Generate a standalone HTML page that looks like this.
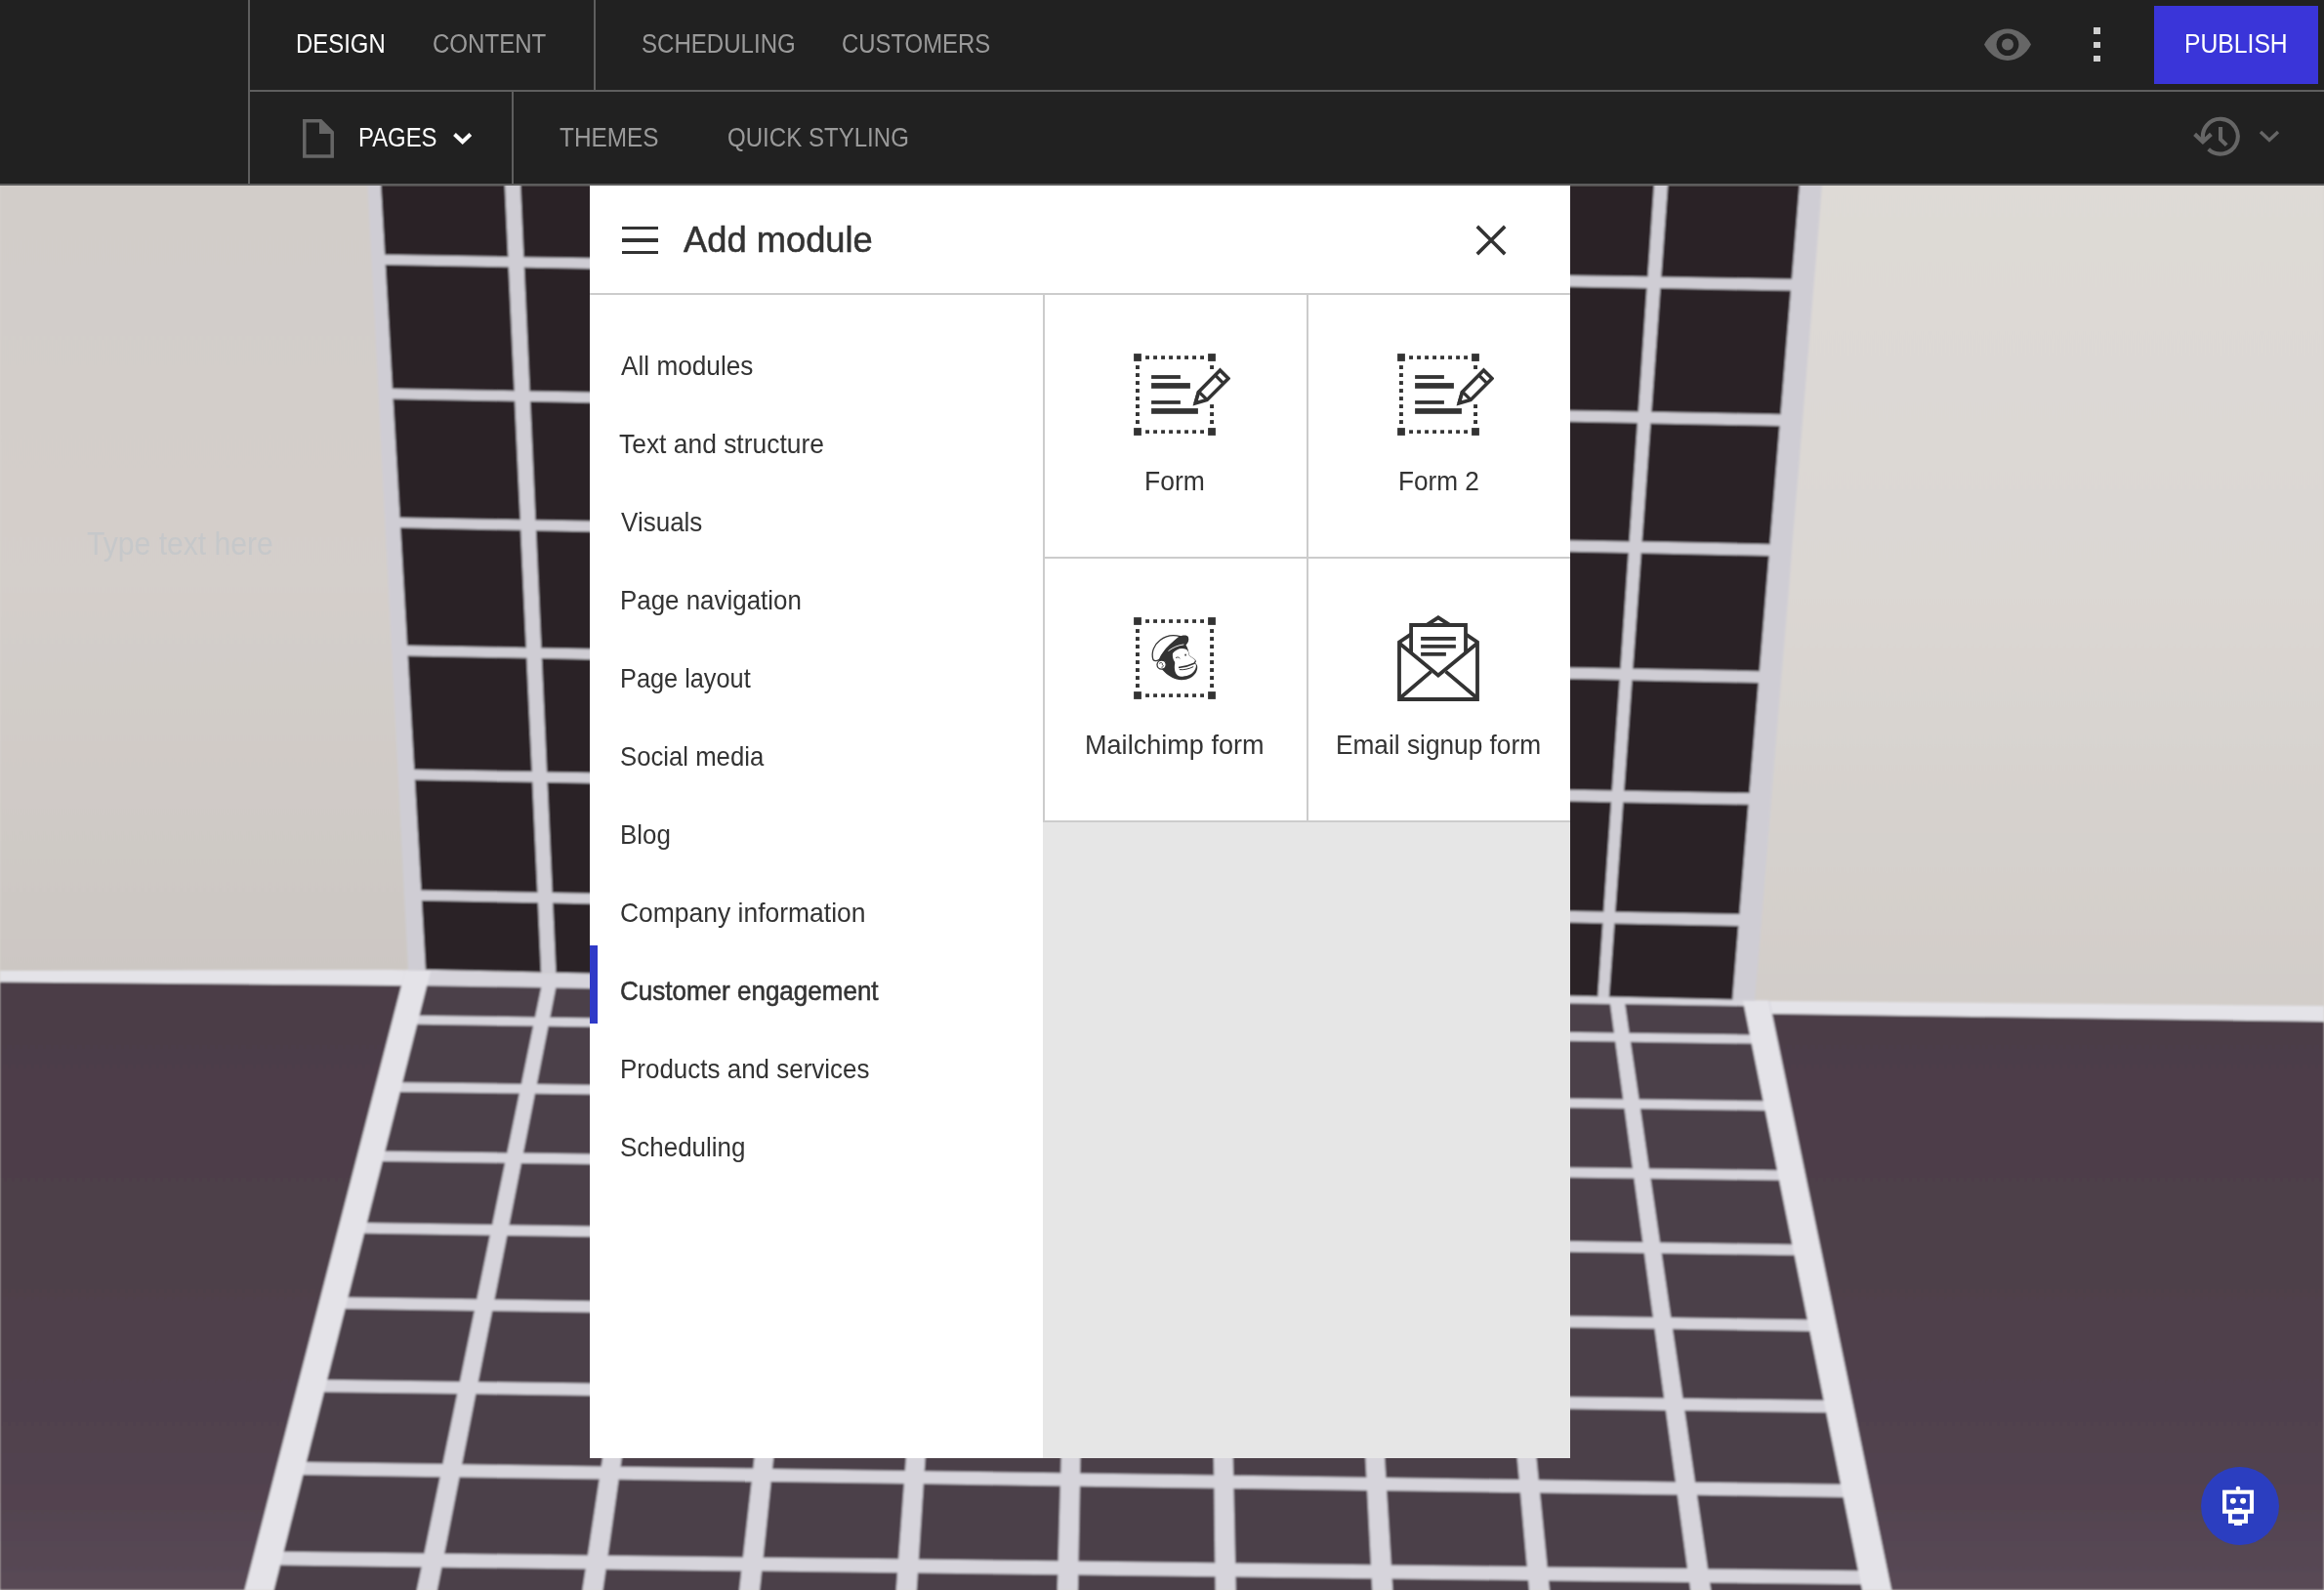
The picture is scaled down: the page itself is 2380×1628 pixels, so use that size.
<!DOCTYPE html>
<html><head><meta charset="utf-8"><title>Add module</title>
<style>
html,body{margin:0;padding:0;width:2380px;height:1628px;overflow:hidden;background:#d8d4d0;}
body{position:relative;font-family:"Liberation Sans", sans-serif;}
.t{position:absolute;white-space:nowrap;line-height:1;transform-origin:0 0;}
.abs{position:absolute;}
</style></head><body>

<svg class="abs" style="left:0;top:0" width="2380" height="1628" viewBox="0 0 2380 1628">
<defs><filter id="soft" x="0" y="0" width="1" height="1"><feGaussianBlur stdDeviation="0.9"/></filter></defs><g filter="url(#soft)">
<defs><linearGradient id="wl" gradientUnits="userSpaceOnUse" x1="0" y1="189" x2="0" y2="1000"><stop offset="0" stop-color="#d2cdc9"/><stop offset="0.5" stop-color="#d4cfcb"/><stop offset="1" stop-color="#ccc7c3"/></linearGradient><linearGradient id="wr" gradientUnits="userSpaceOnUse" x1="0" y1="189" x2="0" y2="1030"><stop offset="0" stop-color="#dedad6"/><stop offset="0.5" stop-color="#dbd7d3"/><stop offset="1" stop-color="#d2cdc9"/></linearGradient></defs>
<rect x="0" y="0" width="1200" height="1628" fill="url(#wl)"/>
<rect x="1200" y="0" width="1180" height="1628" fill="url(#wr)"/>
<polygon points="0.0,994.0 400.0,993.0 1812.0,1025.0 2380.0,1030.0 2380.0,1628.0 0.0,1628.0" fill="#e4e3e8"/>
<defs><linearGradient id="fl" x1="0" y1="0" x2="0" y2="1"><stop offset="0" stop-color="#4c3d47"/><stop offset="0.55" stop-color="#4f404b"/><stop offset="0.85" stop-color="#524350"/><stop offset="1" stop-color="#594955"/></linearGradient></defs>
<polygon points="0.0,1005.5 400.0,1009.0 1812.0,1038.0 2380.0,1046.0 2380.0,1628.0 0.0,1628.0" fill="url(#fl)"/>
<polygon points="415.2,993.6 1000.0,1006.6 1600.0,1020.2 1812.2,1024.7 1937.0,1628.0 250.6,1628.0" fill="#d6d4db"/>
<polygon points="415.3,993.6 441.2,993.6 280.6,1628.0 250.6,1628.0" fill="#e4e3e8"/>
<polygon points="1784.9,1024.6 1811.0,1024.6 1937.0,1628.0 1907.0,1628.0" fill="#e4e3e8"/>
<polygon points="437.2,1009.3 554.3,1011.1 548.0,1041.5 429.5,1039.7" fill="#4c3f4a"/>
<polygon points="427.2,1048.8 546.1,1050.5 533.9,1109.9 412.1,1108.2" fill="#4c3f4a"/>
<polygon points="409.7,1117.9 531.9,1119.5 519.3,1180.4 394.3,1178.7" fill="#4c3f4a"/>
<polygon points="391.7,1188.9 517.2,1190.7 504.1,1253.9 375.8,1251.9" fill="#4c3f4a"/>
<polygon points="373.0,1262.8 501.8,1264.8 488.3,1330.3 356.4,1328.3" fill="#4c3f4a"/>
<polygon points="353.5,1339.9 485.9,1341.9 470.9,1414.7 335.0,1412.8" fill="#4c3f4a"/>
<polygon points="331.9,1425.2 468.3,1427.0 453.4,1499.0 313.7,1497.0" fill="#4c3f4a"/>
<polygon points="310.4,1510.1 450.7,1512.2 434.5,1590.5 290.5,1588.7" fill="#4c3f4a"/>
<polygon points="287.0,1602.6 431.7,1604.4 415.7,1681.8 267.4,1680.0" fill="#4c3f4a"/>
<polygon points="569.2,1011.4 690.5,1013.2 685.9,1043.5 563.3,1041.7" fill="#4c3f4a"/>
<polygon points="561.5,1050.7 684.5,1052.5 675.4,1111.9 549.8,1110.1" fill="#4c3f4a"/>
<polygon points="547.9,1119.8 673.9,1121.5 664.6,1182.4 535.9,1180.6" fill="#4c3f4a"/>
<polygon points="533.9,1190.9 663.0,1192.7 653.3,1256.2 521.4,1254.2" fill="#4c3f4a"/>
<polygon points="519.3,1265.1 651.7,1267.1 641.6,1332.7 506.4,1330.6" fill="#4c3f4a"/>
<polygon points="504.1,1342.2 639.8,1344.3 628.7,1416.8 489.7,1414.9" fill="#4c3f4a"/>
<polygon points="487.3,1427.3 626.8,1429.2 615.8,1501.4 473.1,1499.3" fill="#4c3f4a"/>
<polygon points="470.5,1512.4 613.8,1514.5 601.9,1592.5 455.1,1590.7" fill="#4c3f4a"/>
<polygon points="452.4,1604.7 599.7,1606.4 587.9,1683.9 437.1,1682.1" fill="#4c3f4a"/>
<polygon points="705.5,1013.5 826.9,1015.3 823.5,1045.5 701.2,1043.7" fill="#4c3f4a"/>
<polygon points="699.9,1052.7 822.4,1054.5 815.7,1113.8 691.4,1112.1" fill="#4c3f4a"/>
<polygon points="690.0,1121.7 814.6,1123.4 807.6,1184.3 681.3,1182.6" fill="#4c3f4a"/>
<polygon points="679.8,1192.9 806.5,1194.6 799.2,1258.4 670.7,1256.4" fill="#4c3f4a"/>
<polygon points="669.1,1267.4 797.9,1269.4 790.5,1334.9 659.7,1332.9" fill="#4c3f4a"/>
<polygon points="658.1,1344.5 789.2,1346.6 780.9,1418.9 647.7,1417.1" fill="#4c3f4a"/>
<polygon points="645.9,1429.5 779.5,1431.3 771.3,1503.6 635.5,1501.7" fill="#4c3f4a"/>
<polygon points="633.6,1514.8 769.8,1516.8 760.9,1594.4 622.5,1592.7" fill="#4c3f4a"/>
<polygon points="620.5,1606.7 759.3,1608.4 750.5,1685.9 609.4,1684.2" fill="#4c3f4a"/>
<polygon points="841.9,1015.5 963.4,1017.4 961.2,1047.5 838.8,1045.7" fill="#4c3f4a"/>
<polygon points="837.8,1054.7 960.5,1056.5 956.1,1115.7 831.7,1114.0" fill="#4c3f4a"/>
<polygon points="830.7,1123.6 955.4,1125.3 950.8,1186.3 824.3,1184.6" fill="#4c3f4a"/>
<polygon points="823.2,1194.9 950.0,1196.6 945.2,1260.7 816.6,1258.7" fill="#4c3f4a"/>
<polygon points="815.4,1269.6 944.4,1271.6 939.5,1337.2 808.6,1335.2" fill="#4c3f4a"/>
<polygon points="807.4,1346.8 938.6,1348.8 933.2,1421.0 799.8,1419.2" fill="#4c3f4a"/>
<polygon points="798.6,1431.6 932.3,1433.4 926.9,1505.9 791.0,1503.9" fill="#4c3f4a"/>
<polygon points="789.6,1517.1 925.9,1519.1 920.1,1596.3 781.6,1594.7" fill="#4c3f4a"/>
<polygon points="780.1,1608.6 919.1,1610.3 913.3,1687.8 772.0,1686.1" fill="#4c3f4a"/>
<polygon points="978.5,1017.6 1100.2,1019.5 1099.4,1049.5 976.5,1047.7" fill="#4c3f4a"/>
<polygon points="976.0,1056.7 1099.1,1058.5 1097.4,1117.6 972.1,1115.9" fill="#4c3f4a"/>
<polygon points="971.5,1125.6 1097.2,1127.3 1095.4,1188.3 967.5,1186.5" fill="#4c3f4a"/>
<polygon points="966.8,1196.8 1095.1,1198.6 1093.3,1262.9 962.7,1260.9" fill="#4c3f4a"/>
<polygon points="961.9,1271.9 1093.0,1273.9 1091.1,1339.5 957.7,1337.5" fill="#4c3f4a"/>
<polygon points="956.9,1349.1 1090.8,1351.2 1088.7,1423.1 952.2,1421.3" fill="#4c3f4a"/>
<polygon points="951.4,1433.7 1088.4,1435.5 1086.3,1508.2 946.7,1506.2" fill="#4c3f4a"/>
<polygon points="945.8,1519.3 1085.9,1521.4 1083.7,1598.3 940.8,1596.6" fill="#4c3f4a"/>
<polygon points="939.9,1610.6 1083.3,1612.3 1081.1,1689.9 934.8,1688.1" fill="#4c3f4a"/>
<polygon points="1115.3,1019.7 1237.1,1021.6 1237.5,1051.5 1114.8,1049.7" fill="#4c3f4a"/>
<polygon points="1114.6,1058.7 1237.6,1060.5 1238.4,1119.6 1113.5,1117.9" fill="#4c3f4a"/>
<polygon points="1113.3,1127.5 1238.5,1129.2 1239.2,1190.3 1112.1,1188.5" fill="#4c3f4a"/>
<polygon points="1112.0,1198.8 1239.4,1200.6 1240.2,1265.2 1110.7,1263.2" fill="#4c3f4a"/>
<polygon points="1110.5,1274.1 1240.3,1276.1 1241.1,1341.8 1109.3,1339.8" fill="#4c3f4a"/>
<polygon points="1109.1,1351.5 1241.3,1353.5 1242.2,1425.2 1107.7,1423.4" fill="#4c3f4a"/>
<polygon points="1107.5,1435.8 1242.3,1437.7 1243.2,1510.5 1106.1,1508.5" fill="#4c3f4a"/>
<polygon points="1105.9,1521.7 1243.4,1523.7 1244.3,1600.3 1104.4,1598.6" fill="#4c3f4a"/>
<polygon points="1104.2,1612.5 1244.5,1614.2 1245.5,1691.9 1102.7,1690.1" fill="#4c3f4a"/>
<polygon points="1252.3,1021.8 1374.2,1023.7 1375.7,1053.5 1252.9,1051.7" fill="#4c3f4a"/>
<polygon points="1253.1,1060.7 1376.2,1062.5 1379.2,1121.5 1254.4,1119.8" fill="#4c3f4a"/>
<polygon points="1254.6,1129.5 1379.7,1131.2 1382.9,1192.2 1256.0,1190.5" fill="#4c3f4a"/>
<polygon points="1256.2,1200.8 1383.4,1202.5 1386.8,1267.4 1257.7,1265.4" fill="#4c3f4a"/>
<polygon points="1257.9,1276.4 1387.3,1278.4 1390.7,1344.1 1259.3,1342.1" fill="#4c3f4a"/>
<polygon points="1259.6,1353.8 1391.3,1355.8 1395.0,1427.3 1261.2,1425.5" fill="#4c3f4a"/>
<polygon points="1261.5,1437.9 1395.6,1439.8 1399.4,1512.8 1263.1,1510.8" fill="#4c3f4a"/>
<polygon points="1263.4,1524.0 1400.1,1525.9 1404.0,1602.2 1265.1,1600.5" fill="#4c3f4a"/>
<polygon points="1265.4,1614.5 1404.7,1616.2 1408.7,1693.8 1267.1,1692.1" fill="#4c3f4a"/>
<polygon points="1389.4,1023.9 1511.4,1025.8 1514.1,1055.5 1391.2,1053.7" fill="#4c3f4a"/>
<polygon points="1391.7,1062.8 1514.9,1064.5 1520.3,1123.4 1395.3,1121.7" fill="#4c3f4a"/>
<polygon points="1395.9,1131.4 1521.2,1133.1 1526.7,1194.2 1399.7,1192.5" fill="#4c3f4a"/>
<polygon points="1400.3,1202.8 1527.6,1204.5 1533.5,1269.7 1404.3,1267.7" fill="#4c3f4a"/>
<polygon points="1404.9,1278.7 1534.5,1280.6 1540.5,1346.4 1409.0,1344.4" fill="#4c3f4a"/>
<polygon points="1409.7,1356.1 1541.5,1358.1 1548.0,1429.4 1414.1,1427.6" fill="#4c3f4a"/>
<polygon points="1414.8,1440.0 1549.1,1441.9 1555.8,1515.0 1419.3,1513.1" fill="#4c3f4a"/>
<polygon points="1420.1,1526.2 1557.0,1528.2 1563.8,1604.1 1424.8,1602.4" fill="#4c3f4a"/>
<polygon points="1425.6,1616.4 1565.1,1618.1 1572.1,1695.8 1430.4,1694.1" fill="#4c3f4a"/>
<polygon points="1526.6,1026.0 1649.0,1027.9 1653.0,1057.5 1529.6,1055.7" fill="#4c3f4a"/>
<polygon points="1530.5,1064.8 1654.2,1066.6 1662.3,1125.4 1536.4,1123.7" fill="#4c3f4a"/>
<polygon points="1537.4,1133.3 1663.6,1135.1 1672.0,1196.2 1543.5,1194.4" fill="#4c3f4a"/>
<polygon points="1544.5,1204.7 1673.4,1206.5 1682.4,1271.9 1551.1,1269.9" fill="#4c3f4a"/>
<polygon points="1552.2,1280.9 1683.9,1282.9 1692.9,1348.8 1558.8,1346.7" fill="#4c3f4a"/>
<polygon points="1559.9,1358.4 1694.5,1360.4 1704.2,1431.6 1567.1,1429.7" fill="#4c3f4a"/>
<polygon points="1568.3,1442.1 1705.9,1444.0 1716.0,1517.4 1575.7,1515.3" fill="#4c3f4a"/>
<polygon points="1577.0,1528.5 1717.8,1530.5 1728.1,1606.1 1584.6,1604.4" fill="#4c3f4a"/>
<polygon points="1586.0,1618.4 1730.1,1620.1 1740.7,1697.8 1593.8,1696.1" fill="#4c3f4a"/>
<polygon points="1664.2,1028.1 1786.0,1030.0 1792.0,1059.5 1668.5,1057.7" fill="#4c3f4a"/>
<polygon points="1669.8,1066.8 1793.8,1068.6 1805.7,1127.3 1678.5,1125.6" fill="#4c3f4a"/>
<polygon points="1679.9,1135.3 1807.7,1137.0 1820.1,1198.2 1688.8,1196.4" fill="#4c3f4a"/>
<polygon points="1690.4,1206.7 1822.1,1208.5 1835.4,1274.3 1700.0,1272.2" fill="#4c3f4a"/>
<polygon points="1701.6,1283.2 1837.7,1285.3 1851.0,1351.2 1711.2,1349.0" fill="#4c3f4a"/>
<polygon points="1712.9,1360.7 1853.4,1362.9 1867.7,1433.8 1723.4,1431.8" fill="#4c3f4a"/>
<polygon points="1725.2,1444.3 1870.2,1446.3 1885.1,1519.8 1736.0,1517.7" fill="#4c3f4a"/>
<polygon points="1737.9,1530.8 1887.8,1533.0 1903.0,1608.2 1749.0,1606.4" fill="#4c3f4a"/>
<polygon points="1751.0,1620.4 1905.8,1622.2 1921.5,1700.0 1762.4,1698.1" fill="#4c3f4a"/>
<polygon points="376.5,189.0 700.0,189.0 700.0,999.8 418.0,993.4" fill="#cfcdd4"/>
<polygon points="1500.0,189.0 1866.0,189.0 1797.1,1024.7 1500.0,1017.9" fill="#cfcdd4"/>
<polygon points="390.0,189.0 517.0,189.0 520.4,262.9 394.1,260.7" fill="#2a2125"/>
<polygon points="394.7,271.1 520.9,273.4 526.8,400.2 401.9,397.9" fill="#2a2125"/>
<polygon points="402.5,408.4 527.2,410.8 532.9,532.3 409.5,529.9" fill="#2a2125"/>
<polygon points="410.1,540.3 533.3,542.8 538.9,663.2 417.0,660.9" fill="#2a2125"/>
<polygon points="417.6,671.4 539.4,673.8 544.8,790.1 424.2,788.0" fill="#2a2125"/>
<polygon points="424.8,798.5 545.3,800.7 550.5,913.7 431.3,911.6" fill="#2a2125"/>
<polygon points="431.9,922.0 551.0,924.3 554.2,995.4 435.9,992.7" fill="#2a2125"/>
<polygon points="533.0,189.0 700.0,189.0 700.0,265.7 536.3,263.2" fill="#2a2125"/>
<polygon points="536.8,273.7 700.0,276.7 700.0,403.2 542.5,400.5" fill="#2a2125"/>
<polygon points="543.0,411.1 700.0,414.2 700.0,535.3 548.4,532.6" fill="#2a2125"/>
<polygon points="548.9,543.2 700.0,546.3 700.0,666.2 554.3,663.5" fill="#2a2125"/>
<polygon points="554.8,674.1 700.0,677.2 700.0,792.8 560.0,790.4" fill="#2a2125"/>
<polygon points="560.5,801.0 700.0,803.8 700.0,916.5 565.6,914.0" fill="#2a2125"/>
<polygon points="566.1,924.6 700.0,927.5 700.0,998.8 569.3,995.7" fill="#2a2125"/>
<polygon points="1500.0,189.0 1694.0,189.0 1687.5,283.2 1500.0,280.5" fill="#2a2125"/>
<polygon points="1500.0,291.5 1686.6,294.9 1677.9,421.5 1500.0,418.7" fill="#2a2125"/>
<polygon points="1500.0,429.7 1677.0,433.1 1668.6,554.4 1500.0,551.5" fill="#2a2125"/>
<polygon points="1500.0,562.5 1667.8,566.1 1659.6,684.5 1500.0,681.7" fill="#2a2125"/>
<polygon points="1500.0,692.7 1658.8,696.1 1650.9,809.6 1500.0,807.0" fill="#2a2125"/>
<polygon points="1500.0,818.0 1650.1,821.2 1642.3,933.6 1500.0,931.0" fill="#2a2125"/>
<polygon points="1500.0,942.0 1641.5,945.2 1636.3,1020.2 1500.0,1016.9" fill="#2a2125"/>
<polygon points="1708.0,189.0 1843.0,189.0 1835.0,285.8 1701.2,283.5" fill="#2a2125"/>
<polygon points="1700.3,295.1 1834.0,297.6 1823.6,424.2 1691.2,421.7" fill="#2a2125"/>
<polygon points="1690.3,433.4 1822.6,436.0 1812.6,557.2 1681.5,554.6" fill="#2a2125"/>
<polygon points="1680.7,566.3 1811.7,569.0 1801.9,687.2 1672.1,684.7" fill="#2a2125"/>
<polygon points="1671.3,696.4 1800.9,699.0 1791.6,812.1 1663.1,809.8" fill="#2a2125"/>
<polygon points="1662.2,821.5 1790.6,823.8 1781.4,936.1 1654.1,933.8" fill="#2a2125"/>
<polygon points="1653.3,945.5 1780.4,947.9 1774.2,1023.4 1647.8,1020.5" fill="#2a2125"/>
</g></svg>
<div class="t" style="left:88.7px;top:540.0px;font-size:32.99px;color:#c6c8ca;transform:scaleX(0.9130)">Type text here</div>
<div class="abs" style="left:0;top:0;width:2380px;height:188px;background:#212121;"></div>
<div class="abs" style="left:254px;top:0;width:2px;height:188px;background:#5e5e5e"></div>
<div class="abs" style="left:254px;top:92px;width:2126px;height:2px;background:#5e5e5e"></div>
<div class="abs" style="left:608px;top:0;width:2px;height:93px;background:#5e5e5e"></div>
<div class="abs" style="left:524px;top:93px;width:2px;height:95px;background:#5e5e5e"></div>
<div class="abs" style="left:0;top:188px;width:2380px;height:2px;background:#5c5c5c"></div>
<div class="t" style="left:303.3px;top:30.1px;font-size:28.20px;color:#ffffff;transform:scaleX(0.8481)">DESIGN</div>
<div class="t" style="left:442.7px;top:30.1px;font-size:28.20px;color:#9a9a9a;transform:scaleX(0.8533)">CONTENT</div>
<div class="t" style="left:657.1px;top:30.0px;font-size:28.20px;color:#9a9a9a;transform:scaleX(0.8538)">SCHEDULING</div>
<div class="t" style="left:862.2px;top:30.0px;font-size:28.20px;color:#9a9a9a;transform:scaleX(0.8475)">CUSTOMERS</div>
<div class="t" style="left:367.3px;top:126.5px;font-size:28.05px;color:#ffffff;transform:scaleX(0.8516)">PAGES</div>
<div class="t" style="left:573.1px;top:126.5px;font-size:28.05px;color:#9a9a9a;transform:scaleX(0.8696)">THEMES</div>
<div class="t" style="left:745.1px;top:126.5px;font-size:28.05px;color:#9a9a9a;transform:scaleX(0.8579)">QUICK STYLING</div>
<svg class="abs" style="left:300px;top:115px" width="50" height="52" viewBox="0 0 50 52"><path d="M11.8,8.7 L28.5,8.7 L40.2,20.4 L40.2,45 L11.8,45 Z" fill="none" stroke="#666" stroke-width="3.5" stroke-linejoin="miter"/><path d="M27,7 L42,22 L27,22 Z" fill="#666"/></svg>
<svg class="abs" style="left:460px;top:129px" width="28" height="22" viewBox="0 0 28 22"><path d="M5.5,8.5 L13.7,16.2 L21.8,8.5" fill="none" stroke="#fff" stroke-width="4"/></svg>
<svg class="abs" style="left:2028px;top:24px" width="56" height="44" viewBox="0 0 56 44"><path d="M4,21.6 C9,12 18,5.6 28,5.6 C38,5.6 47,12 52,21.6 C47,31.4 38,38 28,38 C18,38 9,31.4 4,21.6 Z" fill="#666"/><circle cx="28" cy="21.6" r="11.4" fill="#212121"/><circle cx="28" cy="21.6" r="6" fill="#666"/></svg>
<div class="abs" style="left:2144px;top:28.4px;width:7px;height:6.6px;background:#cfcfcf"></div>
<div class="abs" style="left:2144px;top:42.6px;width:7px;height:6.6px;background:#cfcfcf"></div>
<div class="abs" style="left:2144px;top:56.7px;width:7px;height:6.6px;background:#cfcfcf"></div>
<div class="abs" style="left:2206px;top:6px;width:168px;height:80px;background:#3a35d9"></div>
<div class="t" style="left:2237.2px;top:30.7px;font-size:27.62px;color:#ffffff;transform:scaleX(0.8947)">PUBLISH</div>
<svg class="abs" style="left:2240px;top:114px" width="60" height="52" viewBox="0 0 60 52"><path d="M16.6,30.5 A17.9,17.9 0 1 1 21.67,38.83" fill="none" stroke="#666" stroke-width="4.1"/><path d="M7.6,23.4 L15.9,31.2 L24.4,23.4" fill="none" stroke="#666" stroke-width="4.2" stroke-linejoin="miter"/><path d="M34.05,16 L34.05,28.6 L40.2,34.6" fill="none" stroke="#666" stroke-width="4.1"/></svg>
<svg class="abs" style="left:2310px;top:128px" width="28" height="22" viewBox="0 0 28 22"><path d="M5,7 L14,15.5 L23,7" fill="none" stroke="#666" stroke-width="3.4"/></svg>
<div class="abs" style="left:604px;top:190px;width:1004px;height:1303px;background:#ffffff"></div>
<div class="abs" style="left:1068px;top:302px;width:540px;height:1191px;background:#e6e6e6"></div>
<div class="abs" style="left:604px;top:300px;width:1004px;height:2px;background:#cccccc"></div>
<div class="abs" style="left:1068px;top:302px;width:540px;height:540px;background:#ffffff"></div>
<div class="abs" style="left:1068px;top:302px;width:2px;height:540px;background:#cccccc"></div>
<div class="abs" style="left:1338px;top:302px;width:2px;height:540px;background:#cccccc"></div>
<div class="abs" style="left:1068px;top:570px;width:540px;height:2px;background:#cccccc"></div>
<div class="abs" style="left:1068px;top:840px;width:540px;height:2px;background:#cccccc"></div>
<div class="abs" style="left:637px;top:231.6px;width:37px;height:3.4px;background:#333"></div>
<div class="abs" style="left:637px;top:244.2px;width:37px;height:3.4px;background:#333"></div>
<div class="abs" style="left:637px;top:256.8px;width:37px;height:3.4px;background:#333"></div>
<svg class="abs" style="left:1500px;top:218px" width="56" height="56" viewBox="0 0 56 56"><path d="M12.8,13.9 L41.2,42.1 M41.2,13.9 L12.8,42.1" stroke="#333" stroke-width="3.6"/></svg>
<div class="t" style="left:700.3px;top:226.9px;font-size:37.50px;color:#333333;-webkit-text-stroke:0.55px #333333;transform:scaleX(0.9683)">Add module</div>
<div class="t" style="left:635.5px;top:362.0px;font-size:27.03px;color:#333333;transform:scaleX(0.9698)">All modules</div>
<div class="t" style="left:634.3px;top:442.0px;font-size:27.03px;color:#333333;transform:scaleX(0.9775)">Text and structure</div>
<div class="t" style="left:635.5px;top:522.0px;font-size:27.03px;color:#333333;transform:scaleX(0.9628)">Visuals</div>
<div class="t" style="left:635.3px;top:602.0px;font-size:27.03px;color:#333333;transform:scaleX(0.9589)">Page navigation</div>
<div class="t" style="left:635.3px;top:682.0px;font-size:27.03px;color:#333333;transform:scaleX(0.9369)">Page layout</div>
<div class="t" style="left:634.8px;top:762.0px;font-size:27.03px;color:#333333;transform:scaleX(0.9519)">Social media</div>
<div class="t" style="left:635.3px;top:842.0px;font-size:27.03px;color:#333333;transform:scaleX(0.9600)">Blog</div>
<div class="t" style="left:635.0px;top:922.0px;font-size:27.03px;color:#333333;transform:scaleX(0.9795)">Company information</div>
<div class="t" style="left:635.0px;top:1002.0px;font-size:27.03px;color:#333333;-webkit-text-stroke:0.55px #333333;transform:scaleX(0.9628)">Customer engagement</div>
<div class="t" style="left:635.3px;top:1082.0px;font-size:27.03px;color:#333333;transform:scaleX(0.9612)">Products and services</div>
<div class="t" style="left:634.8px;top:1162.0px;font-size:27.03px;color:#333333;transform:scaleX(0.9611)">Scheduling</div>
<div class="abs" style="left:604px;top:968px;width:8px;height:80px;background:#2f3ac8"></div>
<div class="abs" style="left:1150px;top:350px;width:110px;height:100px"><svg width="110" height="100" viewBox="0 0 110 100" style="position:absolute;left:0;top:0">
<g transform="translate(11.1,12.1)">
<rect x="0" y="0" width="7.8" height="7.8" fill="#333"/>
<rect x="76" y="0" width="7.8" height="7.8" fill="#333"/>
<rect x="0" y="76" width="7.8" height="7.8" fill="#333"/>
<rect x="76" y="76" width="7.8" height="7.8" fill="#333"/>
<rect x="12" y="2.1" width="3.9" height="3.7" fill="#333"/>
<rect x="12" y="78.2" width="3.9" height="3.6" fill="#333"/>
<rect x="1.9" y="12" width="3.9" height="3.9" fill="#333"/>
<rect x="78" y="12" width="3.9" height="3.9" fill="#333"/>
<rect x="20" y="2.1" width="3.9" height="3.7" fill="#333"/>
<rect x="20" y="78.2" width="3.9" height="3.6" fill="#333"/>
<rect x="1.9" y="20" width="3.9" height="3.9" fill="#333"/>
<rect x="28" y="2.1" width="3.9" height="3.7" fill="#333"/>
<rect x="28" y="78.2" width="3.9" height="3.6" fill="#333"/>
<rect x="1.9" y="28" width="3.9" height="3.9" fill="#333"/>
<rect x="36" y="2.1" width="3.9" height="3.7" fill="#333"/>
<rect x="36" y="78.2" width="3.9" height="3.6" fill="#333"/>
<rect x="1.9" y="36" width="3.9" height="3.9" fill="#333"/>
<rect x="44" y="2.1" width="3.9" height="3.7" fill="#333"/>
<rect x="44" y="78.2" width="3.9" height="3.6" fill="#333"/>
<rect x="1.9" y="44" width="3.9" height="3.9" fill="#333"/>
<rect x="52" y="2.1" width="3.9" height="3.7" fill="#333"/>
<rect x="52" y="78.2" width="3.9" height="3.6" fill="#333"/>
<rect x="1.9" y="52" width="3.9" height="3.9" fill="#333"/>
<rect x="78" y="52" width="3.9" height="3.9" fill="#333"/>
<rect x="60" y="2.1" width="3.9" height="3.7" fill="#333"/>
<rect x="60" y="78.2" width="3.9" height="3.6" fill="#333"/>
<rect x="1.9" y="60" width="3.9" height="3.9" fill="#333"/>
<rect x="78" y="60" width="3.9" height="3.9" fill="#333"/>
<rect x="68" y="2.1" width="3.9" height="3.7" fill="#333"/>
<rect x="68" y="78.2" width="3.9" height="3.6" fill="#333"/>
<rect x="1.9" y="68" width="3.9" height="3.9" fill="#333"/>
<rect x="78" y="68" width="3.9" height="3.9" fill="#333"/>
</g>
<rect x="29.1" y="34.1" width="29.8" height="3.8" fill="#333"/>
<rect x="29.1" y="42.1" width="39.8" height="5.7" fill="#333"/>
<rect x="29.1" y="60.1" width="29.8" height="3.7" fill="#333"/>
<rect x="29.1" y="68.1" width="47.8" height="5.7" fill="#333"/>
<path d="M74.3,62.8 L77.6,51.2 L99.5,29.1 L108.0,37.5 L86.1,59.4 Z" fill="none" stroke="#333" stroke-width="3.6" stroke-linejoin="miter"/>
<path d="M71.5,65.6 L76,50 L78,52 Z" fill="#333"/>
<line x1="78.2" y1="51.6" x2="85.4" y2="58.6" stroke="#333" stroke-width="3.4"/>
<line x1="95.0" y1="34.6" x2="102.0" y2="41.6" stroke="#333" stroke-width="3.4"/>
</svg></div>
<div class="abs" style="left:1420px;top:350px;width:110px;height:100px"><svg width="110" height="100" viewBox="0 0 110 100" style="position:absolute;left:0;top:0">
<g transform="translate(11.1,12.1)">
<rect x="0" y="0" width="7.8" height="7.8" fill="#333"/>
<rect x="76" y="0" width="7.8" height="7.8" fill="#333"/>
<rect x="0" y="76" width="7.8" height="7.8" fill="#333"/>
<rect x="76" y="76" width="7.8" height="7.8" fill="#333"/>
<rect x="12" y="2.1" width="3.9" height="3.7" fill="#333"/>
<rect x="12" y="78.2" width="3.9" height="3.6" fill="#333"/>
<rect x="1.9" y="12" width="3.9" height="3.9" fill="#333"/>
<rect x="78" y="12" width="3.9" height="3.9" fill="#333"/>
<rect x="20" y="2.1" width="3.9" height="3.7" fill="#333"/>
<rect x="20" y="78.2" width="3.9" height="3.6" fill="#333"/>
<rect x="1.9" y="20" width="3.9" height="3.9" fill="#333"/>
<rect x="28" y="2.1" width="3.9" height="3.7" fill="#333"/>
<rect x="28" y="78.2" width="3.9" height="3.6" fill="#333"/>
<rect x="1.9" y="28" width="3.9" height="3.9" fill="#333"/>
<rect x="36" y="2.1" width="3.9" height="3.7" fill="#333"/>
<rect x="36" y="78.2" width="3.9" height="3.6" fill="#333"/>
<rect x="1.9" y="36" width="3.9" height="3.9" fill="#333"/>
<rect x="44" y="2.1" width="3.9" height="3.7" fill="#333"/>
<rect x="44" y="78.2" width="3.9" height="3.6" fill="#333"/>
<rect x="1.9" y="44" width="3.9" height="3.9" fill="#333"/>
<rect x="52" y="2.1" width="3.9" height="3.7" fill="#333"/>
<rect x="52" y="78.2" width="3.9" height="3.6" fill="#333"/>
<rect x="1.9" y="52" width="3.9" height="3.9" fill="#333"/>
<rect x="78" y="52" width="3.9" height="3.9" fill="#333"/>
<rect x="60" y="2.1" width="3.9" height="3.7" fill="#333"/>
<rect x="60" y="78.2" width="3.9" height="3.6" fill="#333"/>
<rect x="1.9" y="60" width="3.9" height="3.9" fill="#333"/>
<rect x="78" y="60" width="3.9" height="3.9" fill="#333"/>
<rect x="68" y="2.1" width="3.9" height="3.7" fill="#333"/>
<rect x="68" y="78.2" width="3.9" height="3.6" fill="#333"/>
<rect x="1.9" y="68" width="3.9" height="3.9" fill="#333"/>
<rect x="78" y="68" width="3.9" height="3.9" fill="#333"/>
</g>
<rect x="29.1" y="34.1" width="29.8" height="3.8" fill="#333"/>
<rect x="29.1" y="42.1" width="39.8" height="5.7" fill="#333"/>
<rect x="29.1" y="60.1" width="29.8" height="3.7" fill="#333"/>
<rect x="29.1" y="68.1" width="47.8" height="5.7" fill="#333"/>
<path d="M74.3,62.8 L77.6,51.2 L99.5,29.1 L108.0,37.5 L86.1,59.4 Z" fill="none" stroke="#333" stroke-width="3.6" stroke-linejoin="miter"/>
<path d="M71.5,65.6 L76,50 L78,52 Z" fill="#333"/>
<line x1="78.2" y1="51.6" x2="85.4" y2="58.6" stroke="#333" stroke-width="3.4"/>
<line x1="95.0" y1="34.6" x2="102.0" y2="41.6" stroke="#333" stroke-width="3.4"/>
</svg></div>
<div class="abs" style="left:1150px;top:620px;width:110px;height:100px"><svg width="110" height="100" viewBox="0 0 110 100" style="position:absolute;left:0;top:0">
<g transform="translate(11.1,12.1)">
<rect x="0" y="0" width="7.8" height="7.8" fill="#333"/>
<rect x="76" y="0" width="7.8" height="7.8" fill="#333"/>
<rect x="0" y="76" width="7.8" height="7.8" fill="#333"/>
<rect x="76" y="76" width="7.8" height="7.8" fill="#333"/>
<rect x="12" y="2.1" width="3.9" height="3.7" fill="#333"/>
<rect x="12" y="78.2" width="3.9" height="3.6" fill="#333"/>
<rect x="1.9" y="12" width="3.9" height="3.9" fill="#333"/>
<rect x="78" y="12" width="3.9" height="3.9" fill="#333"/>
<rect x="20" y="2.1" width="3.9" height="3.7" fill="#333"/>
<rect x="20" y="78.2" width="3.9" height="3.6" fill="#333"/>
<rect x="1.9" y="20" width="3.9" height="3.9" fill="#333"/>
<rect x="78" y="20" width="3.9" height="3.9" fill="#333"/>
<rect x="28" y="2.1" width="3.9" height="3.7" fill="#333"/>
<rect x="28" y="78.2" width="3.9" height="3.6" fill="#333"/>
<rect x="1.9" y="28" width="3.9" height="3.9" fill="#333"/>
<rect x="78" y="28" width="3.9" height="3.9" fill="#333"/>
<rect x="36" y="2.1" width="3.9" height="3.7" fill="#333"/>
<rect x="36" y="78.2" width="3.9" height="3.6" fill="#333"/>
<rect x="1.9" y="36" width="3.9" height="3.9" fill="#333"/>
<rect x="78" y="36" width="3.9" height="3.9" fill="#333"/>
<rect x="44" y="2.1" width="3.9" height="3.7" fill="#333"/>
<rect x="44" y="78.2" width="3.9" height="3.6" fill="#333"/>
<rect x="1.9" y="44" width="3.9" height="3.9" fill="#333"/>
<rect x="78" y="44" width="3.9" height="3.9" fill="#333"/>
<rect x="52" y="2.1" width="3.9" height="3.7" fill="#333"/>
<rect x="52" y="78.2" width="3.9" height="3.6" fill="#333"/>
<rect x="1.9" y="52" width="3.9" height="3.9" fill="#333"/>
<rect x="78" y="52" width="3.9" height="3.9" fill="#333"/>
<rect x="60" y="2.1" width="3.9" height="3.7" fill="#333"/>
<rect x="60" y="78.2" width="3.9" height="3.6" fill="#333"/>
<rect x="1.9" y="60" width="3.9" height="3.9" fill="#333"/>
<rect x="78" y="60" width="3.9" height="3.9" fill="#333"/>
<rect x="68" y="2.1" width="3.9" height="3.7" fill="#333"/>
<rect x="68" y="78.2" width="3.9" height="3.6" fill="#333"/>
<rect x="1.9" y="68" width="3.9" height="3.9" fill="#333"/>
<rect x="78" y="68" width="3.9" height="3.9" fill="#333"/>
</g>
<path d="M36.5,58 C37.5,47 46,37 57,32 C61,30 66,29.8 67,32.5 C68,35.5 66.5,38.5 64.5,40.5 C66.5,43 67.3,47 67.8,51 L73.6,55 C75.2,56 75.3,58 74,58.8 L75.9,61 C76.8,63.5 76,66.5 74.6,69 C71.5,73.5 67,76.2 60,76.2 C53,76 47,72.5 43,68.6 C40,65.5 37,62 36.5,58 Z" fill="#333"/>
<path d="M31,55.5 C28.5,48 32,40 38,35.5 C43,31.5 50,29.2 58.6,31.6 C52,37 46,42 42.3,47.1 C40,50 38.5,52.5 37.6,55 C35.5,57 32.3,57.2 31,55.5 Z" fill="#fff" stroke="#333" stroke-width="1.3"/>
<path d="M46.5,46.5 C51,43 56.5,40.5 62.4,39.9" fill="none" stroke="#fff" stroke-width="0.9"/>
<path d="M51,49 C53,46 57,44 60.5,44 C63.5,44 66,44.8 66.8,47.2 C67.3,49 67.3,50.5 68,51.6 L73,54.9 C74.2,55.7 74.1,57 73.2,57.6 C72.6,58 72.7,58.6 73.2,59 L74.7,60.5 C75.2,62 74.8,64 73.8,65.6 C71.8,69.6 67.5,72.4 61,72.7 C57,72.9 54.6,71 53.6,68 C52.6,65 52.7,62 53.2,59.6 C53.5,58 52.6,57 52,56 C51,54 50.6,51 51,49 Z" fill="#fff"/>
<path d="M57,63.6 C62,63.2 68,61.6 73.6,59" stroke="#333" stroke-width="1.5" fill="none"/>
<path d="M57.8,65.6 C62,66.2 68,64.8 72.2,62.6" stroke="#333" stroke-width="1" fill="none"/>
<ellipse cx="64.1" cy="50.6" rx="0.8" ry="1.2" fill="#333"/>
<path d="M54,53.6 C55.5,52.6 57.5,52.9 58.4,54.1" stroke="#333" stroke-width="0.9" fill="none"/>
<circle cx="39.6" cy="60.6" r="4.6" fill="#fff" stroke="#333" stroke-width="1.3"/>
<path d="M37.2,59.4 C38.8,57.8 41.2,58.6 40.2,60.4 C42,61 41.4,63.4 39.4,63.2" stroke="#333" stroke-width="0.9" fill="none"/>
</svg></div>
<div class="abs" style="left:1420px;top:620px;width:110px;height:110px"><svg width="110" height="110" viewBox="0 0 110 110" style="position:absolute;left:0;top:0">
<path d="M25.1,29.4 L13,37.5 L13,96 L93,96 L93,37.5 L81,29.4" fill="none" stroke="#333" stroke-width="3.8" stroke-linejoin="miter" stroke-miterlimit="10"/>
<path d="M40.8,20.2 L52.9,12.3 L65,20.2" fill="none" stroke="#333" stroke-width="3.8"/>
<path d="M25.1,48.5 L25.1,20 L81,20 L81,48.5" fill="none" stroke="#333" stroke-width="3.8"/>
<path d="M13,38.5 L52.9,71.5 L93,38.5" fill="none" stroke="#333" stroke-width="3.8" stroke-linejoin="miter"/>
<path d="M13.5,95 L45.5,67.6 M93,95 L60.6,67.6" fill="none" stroke="#333" stroke-width="3.8"/>
<rect x="35.1" y="32" width="35.8" height="3.8" fill="#333"/>
<rect x="35.1" y="40.1" width="35.8" height="3.6" fill="#333"/>
<rect x="35.1" y="47.9" width="25.8" height="3.8" fill="#333"/>
</svg></div>
<div class="t" style="left:1172.3px;top:478.8px;font-size:27.33px;color:#333333;transform:scaleX(0.9683)">Form</div>
<div class="t" style="left:1431.6px;top:478.8px;font-size:27.33px;color:#333333;transform:scaleX(0.9578)">Form 2</div>
<div class="t" style="left:1111.3px;top:749.4px;font-size:27.33px;color:#333333;transform:scaleX(0.9907)">Mailchimp form</div>
<div class="t" style="left:1368.1px;top:749.4px;font-size:27.33px;color:#333333;transform:scaleX(0.9605)">Email signup form</div>
<svg class="abs" style="left:2240px;top:1490px" width="110" height="110" viewBox="0 0 110 110"><circle cx="54" cy="52" r="40" fill="#2b3ec0"/><rect x="38.1" y="37.7" width="27.9" height="20" fill="none" stroke="#fff" stroke-width="4.1"/><circle cx="52" cy="34" r="2.3" fill="#fff"/><rect x="51" y="33" width="2.2" height="4" fill="#fff"/><circle cx="46.9" cy="46.8" r="3" fill="#fff"/><circle cx="57.1" cy="46.8" r="3" fill="#fff"/><rect x="48" y="54" width="8" height="4" fill="#fff"/><rect x="44" y="58.2" width="16" height="9.6" fill="none" stroke="#fff" stroke-width="4"/><rect x="48" y="68" width="8" height="4" fill="#fff"/></svg>
</body></html>
